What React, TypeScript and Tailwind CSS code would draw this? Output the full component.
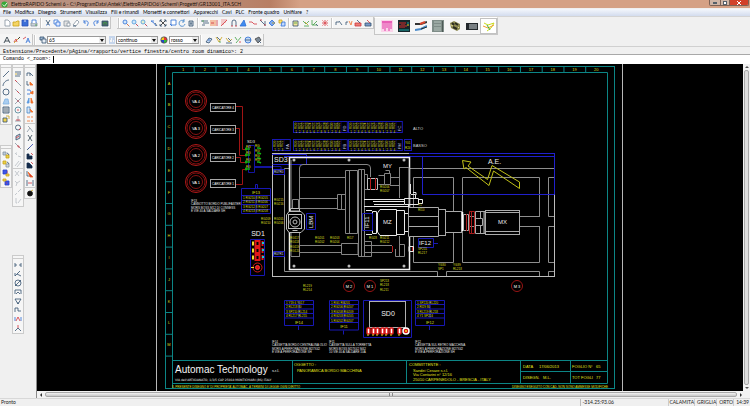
import type { ReactNode } from 'react'

// one stroke or filled shape of an 8x8 icon: path, stroke colour, fill colour
type Shape = [string, string, string?]

interface Tool {
  label: string
  shapes: Shape[]
}

const NAVY = '#34506e'
const BLUE = '#2f6fd6'
const RED = '#d3343c'
const ORANGE = '#f0702a'
const GOLD = '#c9a21a'
const GREEN = '#3fa044'
const GREY = '#8793a0'
const PALE = '#b9bec4'

const PAGE = 'M2 1H5L7 3V7H2Z'
const LENS = 'M5 3A2 2 0 1 1 1 3A2 2 0 1 1 5 3M4.500 4.500L7.500 7.500'

const FILE_TOOLS: Tool[] = [
  { label: 'Nuovo', shapes: [[PAGE, GREY, '#fff']] },
  { label: 'Apri', shapes: [['M1 3H4L5 2H7V7H1Z', GOLD, '#f5d565']] },
  { label: 'Salva', shapes: [['M1 1H7V7H1Z', '#2851b8', '#3c6fd8'], ['M3 2H5', '#fff']] },
  { label: 'Stampa', shapes: [['M1 4H7V7H1Z', GREY, '#c8d0d8'], ['M2 4V1H6V4', BLUE, '#fff'], ['M5 6H7', GREEN]] },
]

const EDIT_TOOLS: Tool[] = [
  { label: 'Taglia', shapes: [['M2 1L5 6M6 1L3 6', NAVY], ['M2 6H3M5 6H6', BLUE]] },
  { label: 'Copia', shapes: [['M1 1H5V5H1Z', BLUE, '#fff'], ['M3 3H7V7H3Z', BLUE, '#dfeaff']] },
  { label: 'Incolla', shapes: [['M1 2H6V7H1Z', GREY, '#e4e4e4'], ['M4 4H7V7H4Z', GREY, '#fff']] },
  { label: 'Cancella', shapes: [['M1 6L5 1L7 3L4 7Z', GREY, '#fff'], ['M1 7H4', NAVY]] },
  { label: 'Annulla', shapes: [['M2 3C4 1 7 2 6 5L5 7M2 1V4H4', BLUE]] },
  { label: 'Ripeti', shapes: [['M6 3C4 1 1 2 2 5L3 7M6 1V4H4', BLUE]] },
  { label: 'Progetto', shapes: [['M1 2H7V7H1Z', NAVY, '#4a6b62'], ['M2 5L4 3L6 5', GREEN]] },
]

const ZOOM_TOOLS: Tool[] = [
  { label: 'Zoom finestra', shapes: [[LENS, BLUE, '#cfe6fb'], ['M5 5L7 7', ORANGE]] },
  { label: 'Zoom precedente', shapes: [[LENS, '#4c98d8', '#cfe6fb'], ['M5 5L7 7', RED]] },
  { label: 'Zoom dinamico', shapes: [[LENS, '#4c98d8', '#e0f0d0'], ['M5 5L7 7', RED]] },
  { label: 'Zoom indietro', shapes: [['M1 2L4 4L6 7M1 2H4', BLUE], ['M5 4L7 7', NAVY]] },
  { label: 'Zoom estensione', shapes: [['M1 1L7 7M7 1L1 7', '#222'], ['M1 3V1H3M5 1H7V3M7 5V7H5M3 7H1V5', NAVY]] },
  { label: 'Zoom pagina', shapes: [['M2 1H7V6H2Z', BLUE, '#fff'], ['M1 5L3 7', BLUE]] },
  { label: 'Ridisegna', shapes: [['M6 2A3 3 0 1 0 7 5M6 0V3H4', '#3b80c8']] },
  { label: 'Pagina', shapes: [['M2 2H6V7H2Z', NAVY, '#ccd5dd'], ['M3 4H5M3 5H5', NAVY]] },
]

const SCHEMA_TOOLS: Tool[] = [
  { label: 'Filo', shapes: [['M0 2H7M2 4H8M1 6H4', NAVY], ['M1 2H3', GREEN]] },
  { label: 'Morsettiera', shapes: [['M1 1V7M3 1V7M5 1V7', ORANGE], ['M7 1V7M1 4H4', RED]] },
  { label: 'Griglia', shapes: [['M1 1H7M1 3H6M1 5H4', '#e88'], ['M1 7L7 1', RED]] },
  { label: 'Magnete', shapes: [['M2 7V3A2 2 0 0 1 6 3V7', NAVY], ['M1 7H3M5 7H7', RED]] },
  { label: 'Testo', shapes: [['M1 7L5 1L7 7Z', BLUE, '#3f8cf0']] },
  { label: 'Linea di rimando', shapes: [['M0 3H3L5 5H8', RED]] },
  { label: 'Nodo', shapes: [['M1 1L6 6M6 2V7', NAVY], ['M1 1H3M5 6H7', RED]] },
  { label: 'Simbolo', shapes: [['M4 1L7 4L4 7L1 4Z', BLUE, '#7eaaf0'], ['M4 4H7', GOLD]] },
  { label: 'Simboli', shapes: [['M1 1H4V4H1Z', GOLD, '#ffe47a'], ['M4 3H7V7H3Z', BLUE, '#c4dbff']] },
]

const CHECK_TOOLS: Tool[] = [
  { label: 'Elenco', shapes: [['M1 2H6V7H1Z', NAVY, '#f5e49a'], ['M2 4H5', GREEN]] },
  { label: 'Aggiorna fili', shapes: [['M1 2L4 5L7 2M7 7H2', GREEN], ['M3 3L6 6', GOLD]] },
  { label: 'Aggiorna simboli', shapes: [['M1 1V6H6M2 6L6 2', GREEN], ['M5 5L7 7', NAVY]] },
  { label: 'Esplodi', shapes: [['M1 1L7 7M7 1L1 7', '#f08a8a'], ['M4 1V7M1 4H7', RED]] },
]

const COPY_TOOLS: Tool[] = [
  { label: 'Sposta filo', shapes: [['M1 6V3H4M4 2L7 6', NAVY]] },
  { label: 'Copia filo', shapes: [['M1 6V3H3', NAVY], ['M4 2L6 6L7 2', ORANGE]] },
  { label: 'Blocco', shapes: [['M1 4H7V7H1Z', RED, '#e88078'], ['M3 1L6 4', NAVY]] },
  { label: 'Inserisci blocco', shapes: [['M1 4H7V7H1Z', NAVY, '#7c9ac8'], ['M3 1L6 4', RED]] },
]

const TEXT_TOOLS: Tool[] = [
  { label: 'Testo', shapes: [['M1 7L4 1L7 7M2 5H6', '#1d2b36']] },
  { label: 'Modifica testo', shapes: [['M1 7L7 1', GOLD], ['M1 6L3 3L4 6', RED], ['M5 3L7 1', '#222']] },
  { label: 'Stile testo', shapes: [['M3 7L5 2L7 7M4 5H6', BLUE], ['M0 3L3 1', RED]] },
]

const LAYER_ICON: Shape[] = [
  ['M1 1H5V4H1Z', NAVY, '#9db6d0'],
  ['M3 3H7V7H3Z', NAVY, '#e9eef5'],
]
const LINE_ICON: Shape[] = [['M1 1H7M1 3H3M4 3H7M1 5H2M4 5H5M6 5H7M1 7H7', '#7fa4dc']]

const ATTRIBUTE_TOOLS: Tool[] = [
  { label: 'Proprietà', shapes: [['M1 6L4 2L7 3L4 7Z', NAVY, '#c4d7f0'], ['M3 4H5', BLUE]] },
  { label: 'Filtra', shapes: [['M1 1L4 6L7 1', GOLD], ['M2 1L5 4', NAVY], ['M4 6H6', GREEN]] },
  { label: 'Modifica', shapes: [['M1 2L4 6L7 3', GOLD], ['M1 7H7M3 2L6 5', NAVY]] },
  { label: 'Copia proprietà', shapes: [['M1 1L3 4M7 1L2 7', GREEN], ['M5 6H7', RED]] },
  { label: 'Globale', shapes: [['M4 1A3 3 0 1 0 4 7A3 3 0 1 0 4 1', BLUE, '#c2d9f6'], ['M1 4H7', NAVY]] },
  { label: 'Pennello', shapes: [['M1 3L5 1L7 4L4 7Z', '#444', '#7e8b98'], ['M5 5L7 7', NAVY]] },
]

const DRAW_TOOLS: Tool[] = [
  { label: 'Linea', shapes: [['M1 7L7 1', NAVY]] },
  { label: 'Arco', shapes: [['M1 7C1 4 4 1 7 1', NAVY]] },
  { label: 'Cerchio', shapes: [['M4 1A3 3 0 1 0 4 7A3 3 0 1 0 4 1', NAVY]] },
  { label: 'Poligono', shapes: [['M1 7L3 2H6L7 7Z', '#7fb0e0', '#a9cdf0']] },
  { label: 'Tratteggio', shapes: [['M1 1H7V7H1Z', NAVY, '#cdd4da'], ['M3 1V7M5 1V7M1 3H7M1 5H7', GREY]] },
  { label: 'Inserisci', shapes: [['M1 3H5V7H1Z', NAVY, '#f2d34c'], ['M4 1H7V4', GOLD]] },
]

const ORDER_TOOLS: Tool[] = [
  { label: 'Raggruppa', shapes: [['M1 1H4V4H1Z', GREY, '#bcd'], ['M4 4H7V7H4Z', GOLD, '#e8d24a'], ['M5 2A3 3 0 0 1 7 4', NAVY]] },
  { label: 'Separa', shapes: [['M1 1H4V4H1Z', GOLD, '#e8d24a'], ['M4 4H7V7H4Z', GREY, '#cfd8e0'], ['M5 2A3 3 0 0 1 7 4', NAVY]] },
  { label: 'Primo piano', shapes: [['M1 1H5V5H1Z', '#2b3fc8', '#3d55e8'], ['M4 5H7V7H4Z', GOLD, '#f2d34c'], ['M5 3H6', RED]] },
  { label: 'Sfondo', shapes: [['M3 3H7V7H3Z', '#2b3fc8', '#3d55e8'], ['M1 1H4V3H1Z', GOLD, '#f2d34c'], ['M4 5H5', RED]] },
]

const SNAP_TOOLS: Tool[] = [
  { label: 'Snap', shapes: [['M1 2H7M3 4H7M1 6H6', NAVY], ['M1 4H3', GOLD]] },
  { label: 'Fine', shapes: [['M1 1L7 7', GREY], ['M1 1L3 3', RED]] },
  { label: 'Medio', shapes: [['M1 1L7 7', GREY], ['M3 3L5 5', RED]] },
  { label: 'Intersezione', shapes: [['M1 1L7 7M7 1L1 7', GREY], ['M3 4H5', RED]] },
  { label: 'Centro', shapes: [['M4 1A3 3 0 1 0 4 7A3 3 0 1 0 4 1', '#4d8295'], ['M3 4H5', RED]] },
  { label: 'Perpendicolare', shapes: [['M1 6H7M4 1V6', GREY], ['M2 5H6', RED]] },
  { label: 'Tangente', shapes: [['M4 1A2 2 0 1 0 4 6A2 2 0 1 0 4 1', NAVY], ['M5 6L7 4', RED]] },
  { label: 'Inserimento', shapes: [['M2 3L6 1V5L2 7Z', NAVY, '#d5dbe0'], ['M2 5L5 3', RED]] },
  { label: 'Vicino', shapes: [['M1 1L7 7', GREY], ['M3 4L5 4L5 6', RED]] },
]

const SNAP_DIMMED: Tool[] = [
  { label: 'Quadrante', shapes: [['M1 2L3 4M4 5L7 6M3 2H2', PALE]] },
  { label: 'Parallela', shapes: [['M1 6L5 1M3 7L7 2', PALE]] },
]

const SNAP_EXTRA: Tool[] = [
  { label: 'Coordinate X', shapes: [['M1 1L5 6M5 1L1 6M6 3H8', PALE]] },
  { label: 'Coordinate Y', shapes: [['M1 2L3 4L6 2M3 4L2 7', PALE]] },
  { label: 'Estensione', shapes: [['M1 7L3 5M4 4L7 1', PALE]] },
  { label: 'Angolo', shapes: [['M2 1V6H3M4 6L7 2', PALE]] },
]

const MODIFY_TOOLS: Tool[] = [
  { label: 'Sposta', shapes: [['M1 6V3H4M4 6V3L7 6', NAVY]] },
  { label: 'Copia oggetti', shapes: [['M1 2V6H3', NAVY], ['M4 6V3L7 6Z', ORANGE, ORANGE]] },
  { label: 'Ruota', shapes: [['M1 2H4L5 4M1 6H4', BLUE], ['M4 5L7 3V6Z', ORANGE, ORANGE]] },
  { label: 'Specchio', shapes: [['M3 1L1 6H3Z', '#5c9ae0', '#5c9ae0'], ['M5 1L7 6H5Z', ORANGE, ORANGE]] },
  { label: 'Scala', shapes: [['M1 1H4V7H1Z', '#4a88c8', '#d4e4f5'], ['M4 3L7 6H5Z', ORANGE, ORANGE]] },
  { label: 'Serie', shapes: [['M2 1V3M2 5V7M6 1V3M6 5V7', ORANGE], ['M3 2H4M3 6H4', ORANGE]] },
]

const TRIM_TOOLS: Tool[] = [
  { label: 'Taglia linea', shapes: [['M1 7L4 3L7 7M2 1L4 3', GREY]] },
  { label: 'Spezza', shapes: [['M2 1L6 7M6 1L2 7', '#2b3f4c']] },
  { label: 'Estendi', shapes: [['M2 6L7 1', '#2b3fae'], ['M1 7L3 5', NAVY]] },
  { label: 'Raccordo', shapes: [['M1 2V7H6V4H3V2Z', '#142b4a', '#142b4a'], ['M5 1L7 3', RED]] },
  { label: 'Smusso', shapes: [['M1 2V7H6V5L3 2Z', '#142b4a', '#142b4a'], ['M5 1L7 3', RED]] },
  { label: 'Offset', shapes: [['M1 1V6H5', NAVY], ['M2 2L7 7H4Z', ORANGE, RED]] },
  { label: 'Stira', shapes: [['M1 1V7M7 1V7', NAVY], ['M2 4H6', RED]] },
]

const BOMB: Tool[] = [
  { label: 'Esplodi blocco', shapes: [['M4 2A2 2 0 1 0 4 7A2 2 0 1 0 4 2', '#111', '#111'], ['M5 2L7 1', GOLD]] },
]

const DIMENSION_TOOLS: Tool[] = [
  { label: 'Quota lineare', shapes: [['M1 2V6M7 2V6M1 4H3M5 4H7', NAVY]] },
  { label: 'Quota allineata', shapes: [['M1 6L6 1M3 4L7 6M1 3V6', NAVY]] },
  { label: 'Diametro', shapes: [['M4 1A3 3 0 1 0 4 7A3 3 0 1 0 4 1M1 7L7 1', NAVY]] },
  { label: 'Raggio', shapes: [['M1 6V2H7V6M2 6L4 4L6 6', NAVY]] },
  { label: 'Angolo', shapes: [['M1 2H7L4 7ZM4 5V7', NAVY]] },
  { label: 'Ordinata', shapes: [['M1 6V2H4V5H7', NAVY]] },
  { label: 'Modifica quota', shapes: [['M1 2V6M7 2V6', BLUE], ['M2 6L4 2L6 6', RED]] },
  { label: 'Stile quota', shapes: [['M1 7L4 4L7 7', NAVY], ['M4 1V4', RED]] },
]

const MENUS = [
  'File', 'Modifica', 'Disegno', 'Strumenti', 'Visualizza', 'Fili e rimandi', 'Morsetti e connettori',
  'Apparecchi', 'Cavi', 'PLC', 'Fronte quadro', 'Unifilare', '?',
]

function Icon({ shapes }: { shapes: Shape[] }) {
  return (
    <svg viewBox="0 0 8 8" className="size-2" aria-hidden="true">
      {shapes.map(([d, stroke, fill], i) => (
        <path key={i} d={d} stroke={stroke} fill={fill ?? 'none'} strokeWidth="0.8" />
      ))}
    </svg>
  )
}

function Tools({ items }: { items: Tool[] }) {
  return items.map((t) => (
    <button key={t.label} type="button" aria-label={t.label} className="flex h-[9px] w-[9px] shrink-0 items-center justify-center">
      <Icon shapes={t.shapes} />
    </button>
  ))
}

function Strip({ className, items }: { className: string; items: Tool[] }) {
  return (
    <div className={`flex items-center justify-around ${className}`}>
      <Tools items={items} />
    </div>
  )
}

function Bar({ children }: { children: ReactNode }) {
  return <div className="flex h-3 items-center border-r border-b border-[#c6c6c6] bg-[#f5f5f5]">{children}</div>
}

function Divider() {
  return <div className="mx-px h-[10px] w-[2px] border-x border-x-[#c8c8c8] border-r-white" />
}

function Column({ children }: { children: ReactNode }) {
  return (
    <div className="flex flex-col items-center border border-[#cbcbcb] bg-[#f6f6f6] pb-px">
      <div className="mb-px h-[3px] w-full border-b border-[#cbcbcb]" />
      {children}
    </div>
  )
}

function Combo({ label, value, options, className }: { label: string; value: string; options: string[]; className: string }) {
  return (
    <div className={`relative h-2 border border-[#9a9a9a] bg-white ${className}`}>
      <select aria-label={label} defaultValue={value} className="block h-full w-full appearance-none bg-transparent pl-px text-[5px] leading-[6px] text-black">
        {options.map((o) => (
          <option key={o}>{o}</option>
        ))}
      </select>
      <svg viewBox="0 0 6 6" className="pointer-events-none absolute top-0 right-0 h-full w-[6px] bg-[#ececec]" aria-hidden="true">
        <path d="M1 2H5L3 5Z" fill="#111" />
      </svg>
    </div>
  )
}

const PANELS: { label: string; art: ReactNode }[] = [
  {
    label: 'Fili',
    art: (
      <>
        <rect width="12" height="12" fill="#fbd3ea" />
        <path d="M1 2H11M2 1V9M4 1V11M6 1V8M8 1V11M10 1V9" stroke="#e23aa6" />
      </>
    ),
  },
  {
    label: 'PLC',
    art: (
      <>
        <rect width="12" height="12" fill="#16262b" />
        <path d="M1 3H8M2 5V8M4 4V8M6 4V8M8 5V7" stroke="#d82a2a" />
        <path d="M9 3H11M1 10H11" stroke="#17a2a0" />
        <path d="M9 5H11" stroke="#e8d22a" />
      </>
    ),
  },
  {
    label: 'Cavi',
    art: (
      <>
        <path d="M0 4L6 4L12 2" stroke="#333" strokeWidth="2" />
        <path d="M5 4L10 2" stroke="#d8452c" strokeWidth="2" />
        <path d="M0 10L6 9L12 6" stroke="#4688c8" strokeWidth="2" />
        <path d="M6 9L12 7" stroke="#233" />
      </>
    ),
  },
  {
    label: 'Quadro',
    art: (
      <>
        <rect width="12" height="12" fill="#7f8d88" />
        <path d="M2 2H9M2 5H9M2 8H9M2 10H9" stroke="#b7c4bd" />
        <path d="M10.500 1V12" stroke="#4e5a56" />
      </>
    ),
  },
  {
    label: 'Apparecchi',
    art: (
      <>
        <path d="M1 3L5 1L11 4V9L8 11L2 8Z" fill="#8d8a52" />
        <path d="M3 3L5 5M6 3L9 5M4 7L8 9" stroke="#2d2d20" strokeWidth="2" />
        <path d="M2 5L4 6M9 7L10 8" stroke="#e4dc90" />
      </>
    ),
  },
  {
    label: 'Morsetti',
    art: (
      <>
        <rect y="3" width="12" height="7" fill="#23282c" />
        <path d="M4 4V9M6 4V9M8 4V9M10 4V9" stroke="#cfd6da" />
      </>
    ),
  },
  {
    label: 'Schema',
    art: (
      <>
        <path d="M1 3L5 5L11 3L8 8L4 11" stroke="#c6dc1e" />
        <path d="M0 6L5 8L11 5" stroke="#f0a028" />
        <path d="M4 5L7 10" stroke="#3fae3a" />
      </>
    ),
  },
]

const CONNECTOR_ROWS = [
  { x: 294, y: 122, n: 13, tag: 'FD' },
  { x: 349, y: 122, n: 13, tag: 'FC' },
  { x: 273, y: 140, n: 3, tag: 'FA' },
  { x: 294, y: 140, n: 13, tag: 'FB' },
  { x: 349, y: 140, n: 13, tag: 'FM' },
]

// yellow wire numbers: x, y, text
const WIRE_LABELS: [number, number, string][] = [
  [261, 220, 'RG209'], [261, 224, 'RG210'],
  [274, 201, 'RG215'], [274, 205, 'RG216'], [274, 220, 'RG205'], [274, 224, 'RG206'],
  [290, 239, 'RG117'], [290, 243, 'RG118'], [290, 248, 'RG119'], [290, 252, 'RG120'],
  [315, 239, 'RG201'], [315, 243, 'RG202'], [330, 239, 'RG203'], [330, 243, 'RG204'],
  [347, 239, 'RI17'], [369, 239, 'RG28'], [380, 239, 'RG211'], [380, 243, 'RG212'],
  [380, 188, 'RG206'], [380, 192, 'RG207'], [418, 206, 'Y1'], [418, 211, 'RI10'],
  [418, 250, 'SP215'], [418, 254, 'RL217'], [438, 266, 'YG30'], [438, 270, 'SP1'],
  [453, 266, 'YG39'], [453, 270, 'RL218'], [303, 287, 'RL219'], [303, 291, 'RL214'],
  [380, 282, 'SP213'], [380, 286, 'RL218'], [380, 291, 'RL211'],
]

const PIN_BOXES = [
  { name: 'IF14', x: 284, y: 300, rows: ['1 Y19  6 Y017', '2 RL218  80', '3 SP210  RL214', '4 RL217  RL215'] },
  { name: 'IF11', x: 329, y: 300, rows: ['1 RG1   RG201', '2 RG206  RG207', '3 RG208  RG209', '4 RG203  RG205', '5 RG202  RG207'] },
  { name: 'IF12', x: 415, y: 300, rows: ['1 SP220  RL220', '2 RI29   80', '3 RL219  RL218', '4 Y1   SP224'] },
]

const CAPTIONS = [
  { x: 191, y: 202, lines: ['IF13', 'CANNOTTO BORDO PUBLIFASTER', 'MORS BOSS M12 DI CONNESS', 'E VIE 40 A SALDARE SH'] },
  { x: 272, y: 343, lines: ['IF14', 'CASSETTA BORDO CENTRALINA OLIO', 'MORS A PERFORAZIONE M27X42', 'E VIE A PERFORAZIONE SH'] },
  { x: 329, y: 343, lines: ['IF11', 'CASSETTA SULLA TORRETTA', 'MORS BOSS M27X42 M42', '10 VIE 40 A SALDARE 10A'] },
  { x: 415, y: 343, lines: ['IF12', 'CASSETTA SUL RETRO MACCHINA', 'MORS A PERFORAZIONE M27X42', 'E VIE A PERFORAZIONE SH'] },
]

function SheetFrame() {
  return (
    <g>
      <path d="M156.500 391V64M622.500 64V391" stroke="#b8b8b8" />
      <g stroke="#0c8585">
        <rect x="165.500" y="66.500" width="449" height="322" />
        <path d="M172.500 389V72.500H607.500V383.500H172.500M172.500 360.500H607M292.500 360V383M406.500 360V383M520.500 360V383M570.500 360V383M520 371.500H607" />
        {Array.from({ length: 19 }, (_, i) => (
          <path key={i} d={`M${194.2 + i * 21.75} 66V72`} />
        ))}
        {Array.from({ length: 13 }, (_, i) => (
          <path key={i} d={`M165 ${94.5 + i * 21.8}H172`} />
        ))}
      </g>
      <g fill="#d8d820" fontSize="4" textAnchor="middle">
        {Array.from({ length: 20 }, (_, i) => (
          <text key={i} x={183 + i * 21.75} y="71">{i + 1}</text>
        ))}
        {'ABCDEFGHIJKLM'.split('').map((c, i) => (
          <text key={c} x="169" y={84.5 + i * 21.8}>{c}</text>
        ))}
      </g>
    </g>
  )
}

function TitleBlock() {
  return (
    <g fontSize="4" fill="#e2e21c">
      <text x="175" y="373" fontSize="10" fill="#f4f4f4">Automac Technology</text>
      <text x="272" y="372" fill="#f4f4f4">s.r.l.</text>
      <text x="175" y="381" fontSize="3" fill="#f4f4f4" className="font-['DejaVu_Sans',sans-serif]">
        VIA dell'ARTIGIANATO, 1/3/5  CAP 25018 MONTICHIARI (BS) ITALY
      </text>
      <text x="294" y="366">OGGETTO :</text>
      <text x="297" y="372">PANORAMICA BORDO MACCHINA</text>
      <text x="409" y="366">COMMITTENTE :</text>
      <text x="413" y="372">Sandei Cesare s.r.l.</text>
      <text x="413" y="376">Via Contarini n° 12/16</text>
      <text x="413" y="381">25010 CARPENEDOLO - BRESCIA - ITALY</text>
      <text x="523" y="368">DATA</text>
      <text x="539" y="368">17/06/2013</text>
      <text x="523" y="379">DISEGN.</text>
      <text x="543" y="379">M.L.</text>
      <text x="572" y="368">FOGLIO N°</text>
      <text x="596" y="368">65</text>
      <text x="572" y="379">TOT FOGLI</text>
      <text x="596" y="379">77</text>
      <text x="172" y="388" fontSize="3">IL PRESENTE DISEGNO E' DI PROPRIETA' AUTOMAC, A TERMINI DI LEGGE OGNI DIRITTO</text>
      <text x="608" y="388" fontSize="3" textAnchor="end">DISEGNO ESEGUITO CON CAD, NON SONO AMMESSE MODIFICHE</text>
    </g>
  )
}

function Loaders() {
  return (
    <g>
      {[4, 3, 2, 1].map((n, i) => (
        <g key={n}>
          <circle cx="196" cy={101 + i * 27} r="10.500" stroke="#b01818" />
          <circle cx="196" cy={101 + i * 27} r="9" stroke="#7c1010" />
          <circle cx="196" cy={101 + i * 27} r="6.500" stroke="#861212" />
          <text x="196" y={102.5 + i * 27} fontSize="4" fill="#fff" textAnchor="middle">VA {n}</text>
        </g>
      ))}
      {[[4, 103.5], [3, 125.5], [2, 153.5], [1, 179.5]].map(([n, y]) => (
        <g key={n}>
          <rect x="210.500" y={y} width="25" height="8" stroke="#a8a8a8" />
          <text x="223" y={y + 5} fontSize="3" fill="#fff" textAnchor="middle">CARICATORE {n}</text>
        </g>
      ))}
      <path d="M236 106.500H242.500V149.500H247M236 128.500H239.500V155.500H247M236 157.500H240.500V162.500H247M236 184.500H242.500V169.500H247" stroke="#a01414" />
      <path d="M248.500 145.500H254.500V172.500H248.500ZM255 167.500H273M281 169.500V166.500H255" stroke="#1414a0" />
      <text x="251" y="143" fontSize="4" fill="#e4e4e4" textAnchor="middle">SD3</text>
      {[149, 155, 162, 169].map((y) => (
        <g key={y}>
          <path d={`M245 ${y}H250M246 ${y - 1.5}V${y + 1.5}`} stroke="#12b012" strokeWidth="1.500" />
          <text x="246" y={y - 1} fontSize="3" fill="#e2e21c">RG</text>
        </g>
      ))}
      {[147, 152, 157, 161].map((y) => (
        <g key={y}>
          <path d={`M257 ${y + 1}H259L261 ${y + 2}`} stroke="#12b012" strokeWidth="1.500" />
          <text x="255" y={y} fontSize="3" fill="#e2e21c">RG</text>
        </g>
      ))}
    </g>
  )
}

function ConnectorRows() {
  return (
    <g>
      {CONNECTOR_ROWS.map((r, k) => (
        <g key={k}>
          <rect x={r.x - 0.5} y={r.y - 0.5} width={r.n * 3.6 + 7} height="11" stroke="#1818b4" />
          {Array.from({ length: r.n }, (_, i) => (
            <g key={i} fill="#dede20" fontSize="3">
              <path d={`M${r.x + 4 + i * 3.6} ${r.y}V${r.y + 11}`} stroke="#101078" strokeWidth="0.500" />
              <text transform={`translate(${r.x + 3 + i * 3.6} ${r.y + 7}) rotate(-90)`}>RI{20 + i}</text>
              <text x={r.x + 1.2 + i * 3.6} y={r.y + 10.500}>{(i % 9) + 1}</text>
            </g>
          ))}
          <text transform={`translate(${r.x + r.n * 3.6 + 5} ${r.y + 9}) rotate(-90)`} fontSize="4" fill="#c4c4e8">{r.tag}</text>
        </g>
      ))}
      <rect x="404.500" y="139.500" width="7" height="11" stroke="#1818b4" />
      <text x="405" y="144" fontSize="3" fill="#dede20">Y01</text>
      <text x="405" y="149" fontSize="3" fill="#dede20">R24</text>
      <text x="413" y="130" fontSize="4" fill="#d4d4d4">ALTO</text>
      <text x="413" y="147" fontSize="4" fill="#d4d4d4">BASSO</text>
    </g>
  )
}

function Machine() {
  return (
    <g>
      {/* bed */}
      <g stroke="#8e8e8e">
        <path d="M409 168.500H555M413.500 177.500H453.500V262.500H413.500ZM462.500 177.500H539.500V216.500H462.500ZM462.500 226.500H539.500V262.500H462.500ZM555 177.500H548.500V216.500H555M555 226.500H548.500V262.500H555M446.500 276V271.500H539.500V276M548.500 276V271.500H555M430 271.500H437.500V276" />
        <path d="M289 168.500H284.500V271.500H437M520 216.500H540M520 226.500H540" />
      </g>
      <rect x="272.500" y="153.500" width="282" height="123" stroke="#bcbcbc" />
      <path d="M284 156.500H555M554.500 154V194.500H422.500V157M272 154.500H306.500V164.500H272.500M409 153.500H555M273.500 169.500H284.500V174.500H273.500ZM273.500 251.500H284.500V256.500H273.500Z" stroke="#2020cc" />
      <text x="274" y="173" fontSize="3" fill="#d8d8ff">R07R0</text>
      <text x="274" y="255" fontSize="3" fill="#d8d8ff">R07R1</text>

      {/* carriage plate */}
      <rect x="289.500" y="157.500" width="120" height="112" stroke="#f2f2f2" strokeWidth="1.500" />
      <g fill="#bbb">
        {[[294, 160], [349, 160], [404, 160], [294, 266], [349, 266], [404, 266]].map(([x, y]) => (
          <circle key={`${x}-${y}`} cx={x} cy={y} r="1.500" />
        ))}
      </g>
      <g stroke="#858585">
        <path d="M299.500 256V168Q299.500 164.500 303 164.500H367Q370.500 164.500 370.500 168V177M291 256.500H300M291 160V256" />
        <path d="M300 177.500H346M300 198.500H338M300 208.500H338M300 245.500H341M300 252.500H341" />
        <path d="M337.500 194.500H345.500V209.500H337.500ZM341.500 194V209M292.500 199.500H298.500V209.500H292.500ZM341.500 243.500H358V254.500H341.500Z" />
        <path d="M345.500 170.500H357.500V233.500H345.500ZM349.500 171V233M358.500 169.500H364.500V256.500H358.500ZM361.500 170V256" fill="#000" />
        <path d="M364 245.500H392M364 252.500H392M364 241.500H371.500V256.500H364M399.500 167.500H409V209M399.500 167V198M399.500 244.500H404.500V256.500H395.500V249M399.500 236V256" />
        <path d="M364.500 174.500H367.500V189.500H364.500M378.500 175.500H384.500V184.500H378.500M384.500 173.500H390.500V184.500H384.500ZM385.500 170.500H389.500V173.500M390 177.500H399M390 185.500H399" />
      </g>
      <path d="M367.500 178.500H377.500V189.500H367.500Z" stroke="#bdbdbd" fill="#000" />
      <path d="M370.500 178V190M375.500 178V190M392.500 246V252M412.500 247V252" stroke="#b81c1c" />
      <g stroke="#e8e8e8">
        <path d="M364 199.500H404M364 206.500H409M373 201.500H404M374 204.500H404" />
        <path d="M404.500 198.500H418.500V204.500H404.500ZM411 194.500H415.500V198M418.500 199.500H422.500V203.500H418.500ZM410.500 184V194M408.500 205V208M413 192.500H416V195M409 246.500H413.500V251.500H409Z" />
        <path d="M366 210.500H372M366 234.500H372M372.500 211.500H376.500V233.500H372.500Z" />
        <path d="M380 209.500H396.500V235.500H380L377.500 232V213Z" fill="#000" />
        <path d="M397 210.500H404.500V234.500H397M404.500 213.500H408.500V231.500H404.500" />
      </g>

      {/* spindle and main motor */}
      <g stroke="#aaa" fill="#000">
        <path d="M408.500 207.500H438.500V236.500H408.500ZM408 216.500H438M408 226.500H438" />
        <rect x="438.500" y="209.500" width="7" height="26" />
        <rect x="445.500" y="211.500" width="16" height="21" />
        <path d="M463.500 214.500H468.500V230.500H463.500ZM475.500 211.500H485V233.500H475.500ZM476 218.500H482.500V225.500H476M480.500 212V218M480.500 226V233M484 212V233" />
        <rect x="485.500" y="210.500" width="34" height="24" />
        <path d="M486 212.500H519M486 231.500H519" />
      </g>
      <path d="M462.500 212V231" stroke="#fff" strokeWidth="1.500" />
      <path d="M466.500 214V231M469.500 211.500H474.500V233.500H469.500ZM471.500 212V233" stroke="#a81c1c" />

      {/* LBM drive */}
      <g stroke="#bdbdbd" fill="#000">
        <path d="M289 211.500H301L304.500 215V229L301 232.500H289L286.500 229V215Z" />
        <rect x="288.500" y="214.500" width="13" height="14" />
        <circle cx="295" cy="222" r="5" />
        <circle cx="295" cy="222" r="2" />
        <path d="M290.500 208.500H299.500V211H290.500ZM292.500 230.500H297.500" />
      </g>

      <path d="M306.500 213.500H315.500V229.500H306.500ZM362.500 213.500H372.500V230.500H362.500ZM418.500 238.500H433.500V247.500H418.500ZM434 243.500H438" stroke="#1818b4" />
      <path d="M462.500 160.500L471 162L468 166L487.500 179.500L492 165.500L519.500 182V188.500L493.500 171L489 185.500L466 167.500L464 169Z" stroke="#c0c018" />
      <g fill="#ececec" fontSize="6">
        <text x="274" y="162" fontSize="7">SD3</text>
        <text transform="translate(313 228) rotate(-90)">LBM</text>
        <text transform="translate(369 228) rotate(-90)">IF11</text>
        <text x="383" y="168">MY</text>
        <text x="383" y="224">MZ</text>
        <text x="498" y="224">MX</text>
        <text x="488" y="164" fontSize="7">A.E.</text>
        <text x="419" y="245">IF12</text>
      </g>
    </g>
  )
}

function FieldDevices() {
  return (
    <g>
      <g stroke="#1818b4">
        <path d="M241.500 188.500H270.500V213.500H241.500ZM242 195.500H270M242 200.500H270M242 204.500H270M242 209.500H270M256 195V213M255.500 188V184.500H257.500V188" />
        <path d="M250.500 239.500H264.500V275.500H250.500ZM363.500 300.500H411.500V337.500H363.500Z" />
      </g>
      <g fill="#dede20" fontSize="3">
        <text x="256" y="194" fontSize="4" textAnchor="middle">IF13</text>
        {[199, 203, 208, 212].map((y, i) => (
          <text key={y} x="243" y={y}>{`${i + 1} RG21${i}  8 RG20${i + 5}`}</text>
        ))}
      </g>

      <text x="258" y="236" fontSize="7" fill="#f0f0f0" textAnchor="middle">SD1</text>
      {[243, 250, 257].map((y) => (
        <g key={y}>
          <path d={`M253 ${y - 1.5}V${y + 2.5}`} stroke="#f0e030" strokeWidth="2" />
          <rect x="255.500" y={y - 2} width="4" height="5" stroke="#e01818" strokeWidth="2" />
          <path d={`M262.500 ${y - 2}V${y + 3}`} stroke="#e01818" strokeWidth="2" />
          <path d={`M262 ${y}H264`} stroke="#20c8c8" strokeWidth="2" />
        </g>
      ))}
      <circle cx="257.500" cy="267.500" r="4.500" stroke="#d01818" />
      <circle cx="257.500" cy="267.500" r="2" stroke="#f04040" fill="#e01010" />
      <path d="M251 267.500H254" stroke="#e8d820" />

      {[[349, 2], [370, 1], [517, 3]].map(([x, n]) => (
        <g key={n}>
          <circle cx={x} cy="286" r="5.500" stroke="#981414" />
          <text x={x} y="287.500" fontSize="4" fill="#fff" textAnchor="middle">M {n}</text>
        </g>
      ))}

      {PIN_BOXES.map((b) => {
        const bottom = b.y + b.rows.length * 4.5
        return (
          <g key={b.name}>
            <path d={`M${b.x + 0.5} ${b.y + 0.5}h29v${bottom - b.y + 7}h-29ZM${b.x + 15} ${b.y}V${bottom}M${b.x + 14.5} ${bottom + 8}v4`} stroke="#1818b4" />
            {b.rows.map((row, i) => (
              <g key={row}>
                <text x={b.x + 2} y={b.y + 3.5 + i * 4.5} fontSize="3" fill="#dede20">{row}</text>
                <path d={`M${b.x} ${b.y + 4.5 + i * 4.5}h29`} stroke="#1818b4" />
              </g>
            ))}
            <text x={b.x + 15} y={bottom + 5.5} fontSize="4" fill="#dede20" textAnchor="middle">{b.name}</text>
          </g>
        )
      })}

      <rect x="369.500" y="301.500" width="36" height="26" stroke="#b0b0b0" />
      <text x="388" y="316" fontSize="7" fill="#f0f0f0" textAnchor="middle">SD0</text>
      {[368, 373, 377, 382, 386, 391, 399].map((x) => (
        <g key={x}>
          <rect x={x - 1} y="328" width="3" height="6" rx="1" stroke="#e01818" fill="#fff" strokeWidth="1.500" />
          <path d={`M${x} 334V336`} stroke="#e8d820" />
        </g>
      ))}
      <circle cx="406" cy="331" r="3" stroke="#fff" fill="#d81010" strokeWidth="1.500" />
      <circle cx="406" cy="331" r="1" fill="#f0e030" />

      <g fill="#dede20" fontSize="3">
        {WIRE_LABELS.map(([x, y, t]) => (
          <text key={`${x}-${y}`} x={x} y={y}>{t}</text>
        ))}
      </g>
      <g fill="#e4e4e4" fontSize="3">
        {CAPTIONS.map((c) =>
          c.lines.map((line, i) => (
            <text key={`${c.x}-${line}`} x={c.x} y={c.y + i * 3.3}>{line}</text>
          )),
        )}
      </g>
    </g>
  )
}

function Drawing() {
  return (
    <svg
      viewBox="37 64 706 327"
      className="block h-full w-full font-['Liberation_Sans',sans-serif]"
      fill="none"
      role="img"
      aria-label="Panoramica bordo macchina"
    >
      <SheetFrame />
      <TitleBlock />
      <Loaders />
      <ConnectorRows />
      <Machine />
      <FieldDevices />
    </svg>
  )
}

export default function App() {
  return (
    <div className="flex h-screen flex-col overflow-hidden bg-[#f0f0f0] font-['Lato','Liberation_Sans',sans-serif] text-[5px] leading-[7px] text-black">
      <header className="flex h-2 shrink-0 items-center justify-between bg-[#d5a185]">
        <div className="flex h-full w-[300px] items-center gap-[3px] bg-linear-to-r from-[#b8917f] from-60% via-[#b87f64] via-90% to-[#d5a185] pl-px">
          <svg viewBox="0 0 8 8" className="size-[7px]" aria-hidden="true">
            <circle cx="4" cy="4" r="3.500" fill="#38a838" />
            <path d="M2 4L4 6L7 2" stroke="#fff" fill="none" />
          </svg>
          <h1 className="whitespace-nowrap text-[#1c100a]">
            ElettroRAPIDO Schemi 6 - C:\ProgramData\Antek\ElettroRAPIDO6\Schemi\Progetti\GR13001_ITA.SCH
          </h1>
        </div>
        <div className="mr-px flex h-[6px] self-start overflow-hidden rounded-b-xs border border-t-0 border-[#7c6256]">
          <button type="button" aria-label="Riduci" className="flex w-[10px] items-center justify-center bg-[#cfb5a6]">
            <span className="h-[2px] w-1 border border-[#55606a] bg-white" />
          </button>
          <button type="button" aria-label="Ripristina" className="flex w-[10px] items-center justify-center border-x border-[#7c6256] bg-[#cfb5a6]">
            <span className="size-1 border border-[#55606a] bg-white" />
          </button>
          <button type="button" aria-label="Chiudi" className="flex w-[18px] items-center justify-center bg-[#d2412a]">
            <svg viewBox="0 0 4 4" className="size-1"><path d="M0 0L4 4M4 0L0 4" stroke="#fff" /></svg>
          </button>
        </div>
      </header>

      <nav className="mt-px flex h-2 shrink-0 items-center gap-1 border-b border-[#d4d4d4] bg-linear-to-b from-[#f4f7fc] to-[#d3dcee] pl-[3px]">
        {MENUS.map((m) => (
          <button key={m} type="button" className="whitespace-nowrap leading-[7px]">{m}</button>
        ))}
      </nav>

      <div className="flex h-[30px] shrink-0 border-b border-[#d0d0d0]">
        <div className="flex flex-col justify-between">
          <div className="flex gap-[6px]">
            <Bar>
              <Strip className="w-[39px] pl-[2px]" items={FILE_TOOLS} />
              <Divider />
              <Strip className="w-[67px]" items={EDIT_TOOLS} />
            </Bar>
            <Bar>
              <Divider />
              <Strip className="w-[75px]" items={ZOOM_TOOLS} />
              <Divider />
              <Strip className="w-[87px]" items={SCHEMA_TOOLS} />
              <Divider />
              <Strip className="w-[39px]" items={CHECK_TOOLS} />
              <Divider />
              <Strip className="w-[39px]" items={COPY_TOOLS} />
            </Bar>
          </div>
          <div className="flex">
            <Bar>
              <Strip className="w-[32px] pl-[2px]" items={TEXT_TOOLS} />
            </Bar>
            <Bar>
              <Divider />
              <div className="flex items-center pl-[2px]">
                <Icon shapes={LAYER_ICON} />
                <Combo label="Layer" value="65" options={['0', '65']} className="w-[59px]" />
              </div>
              <div className="flex items-center pl-[2px]">
                <Icon shapes={LINE_ICON} />
                <Combo label="Tipo linea" value="continuo" options={['continuo', 'tratteggio']} className="w-[42px]" />
              </div>
              <div className="flex items-center gap-px pl-[2px]">
                <svg viewBox="0 0 8 8" className="size-2" aria-hidden="true">
                  <path d="M4 4V1A3 3 0 0 1 7 4Z" fill="#e33" />
                  <path d="M4 4H7A3 3 0 0 1 4 7Z" fill="#3b3" />
                  <path d="M4 4V7A3 3 0 0 1 1 4Z" fill="#24c" />
                  <path d="M4 4H1A3 3 0 0 1 4 1Z" fill="#ec2" />
                  <circle cx="4" cy="4" r="3.200" stroke="#333" strokeWidth="0.700" fill="none" />
                </svg>
                <Combo label="Colore" value="rosso" options={['rosso', 'giallo', 'verde']} className="w-[30px]" />
              </div>
              <Divider />
              <Strip className="ml-px w-[59px]" items={ATTRIBUTE_TOOLS} />
            </Bar>
          </div>
        </div>
        <div className="flex h-[18px] items-center border border-[#c6c6c6] border-t-white bg-[#f5f5f5] pl-[3px]">
          {PANELS.map((p) => (
            <button
              key={p.label}
              type="button"
              aria-label={p.label}
              className={`flex h-4 w-[17px] items-center justify-center ${p.label === 'Schema' ? 'border border-[#c2c2c2] bg-white' : ''}`}
            >
              <svg viewBox="0 0 12 12" className="size-3" fill="none" aria-hidden="true">{p.art}</svg>
            </button>
          ))}
        </div>
      </div>

      <section className="shrink-0 pt-[2px] font-['Liberation_Mono',monospace]">
        <p className="h-[6px] border-b border-[#a8a8a8] pl-[3px] leading-[6px] whitespace-pre">
          Estensione/Precedente/pAgina/&lt;rapporto/vertice finestra/centro zoom dinamico&gt;: 2
        </p>
        <label className="flex h-[9px] items-center gap-[2px] bg-white pl-[3px]">
          Comando &lt;_zoom&gt;:
          <input type="text" className="h-[7px] w-10 border-l border-black bg-white pl-px outline-none" />
        </label>
      </section>

      <main className="flex min-h-0 flex-1">
        <aside className="flex w-[37px] shrink-0 items-start border-r border-[#8a8a8a]">
          <div className="flex w-3 flex-col gap-5">
            <Column><Tools items={DRAW_TOOLS} /></Column>
            <Column><Tools items={ORDER_TOOLS} /></Column>
          </div>
          <div className="flex w-3 flex-col gap-12">
            <Column>
              <Tools items={SNAP_TOOLS} />
              <Tools items={SNAP_DIMMED} />
              <div className="w-full border-t border-[#cbcbcb]" />
              <Tools items={SNAP_EXTRA} />
            </Column>
            <Column><Tools items={DIMENSION_TOOLS} /></Column>
          </div>
          <div className="w-3">
            <Column>
              <Tools items={MODIFY_TOOLS} />
              <div className="w-full border-t border-[#cbcbcb]" />
              <Tools items={TRIM_TOOLS} />
              <div className="w-full border-t border-[#cbcbcb]" />
              <Tools items={BOMB} />
            </Column>
          </div>
        </aside>
        <div className="flex min-w-0 flex-1 flex-col">
          <div className="flex min-h-0 flex-1">
            <div className="min-w-0 flex-1 bg-black"><Drawing /></div>
            <div className="flex w-[7px] flex-col items-center justify-between bg-[#f2f2f2] py-px">
              <svg viewBox="0 0 4 4" className="size-1"><path d="M0 3H4L2 1Z" fill="#555" /></svg>
              <div className="my-px w-[5px] flex-1 rounded-xs border border-[#a8a8a8] bg-[#dcdcdc]" />
              <svg viewBox="0 0 4 4" className="size-1"><path d="M0 1H4L2 3Z" fill="#555" /></svg>
            </div>
          </div>
          <div className="flex h-[7px] shrink-0 items-center gap-[2px] bg-[#f2f2f2] pr-[7px] pl-[2px]">
            <svg viewBox="0 0 4 4" className="size-1"><path d="M3 0V4L1 2Z" fill="#333" /></svg>
            <div className="flex h-[5px] flex-1 items-center justify-center rounded-xs border border-[#a8a8a8] bg-linear-to-b from-[#f2f2f2] to-[#c8c8c8]">
              <span className="h-[3px] w-1 border-x border-[#888]" />
            </div>
            <svg viewBox="0 0 4 4" className="size-1"><path d="M1 0V4L3 2Z" fill="#333" /></svg>
          </div>
        </div>
      </main>

      <footer className="flex h-2 shrink-0 items-center gap-[2px] border-t border-[#d8d8d8] px-px text-[#222]">
        <span className="flex-1">Pronto</span>
        <span className="w-[86px] border-l border-[#bbb] pl-px">-314.25:93.06</span>
        <span className="border-x border-[#ccc]">CALAMITA</span>
        <span className="border-r border-[#ccc]">GRIGLIA</span>
        <span className="border-r border-[#ccc]">ORTO</span>
        <span>14:39</span>
      </footer>
    </div>
  )
}
